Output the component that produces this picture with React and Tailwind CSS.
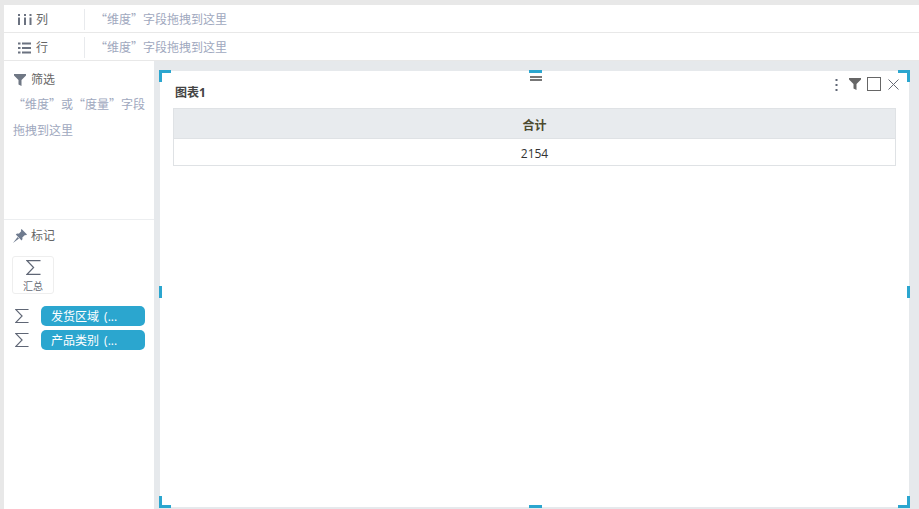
import React from "react";

const font = { fontFamily: '"Open Sans", "Noto Sans CJK SC", sans-serif' };
const cjkFont = { fontFamily: '"Noto Sans CJK SC", sans-serif' };

function Sigma({ className }) {
  return (
    <svg viewBox="0 0 15 15" className={className} fill="none" stroke="#5f6675" strokeWidth="1.2">
      <path d="M14.5 0.6H1L7.6 7.5L1 14.4H14.5" />
    </svg>
  );
}

function FilterIcon({ className, color }) {
  return (
    <svg viewBox="0 0 12 12" className={className} fill={color}>
      <path d="M0 0H12V1.5L7.5 6V12L4.5 10.5V6L0 1.5Z" />
    </svg>
  );
}

function ShelfRow({ icon, label }) {
  return (
    <div className="flex h-[27px] items-center bg-white pt-[2px]">
      <div className="flex w-[80px] items-center pl-[14px]">
        <div className="flex w-[18px]">{icon}</div>
        <span className="text-xs text-[#666666]">{label}</span>
      </div>
      <div className="h-[21px] w-px bg-[#e8eaed]" />
      <span style={cjkFont} className="mb-[2px] ml-[10px] text-xs text-[#a0a8be]">“维度”字段拖拽到这里</span>
    </div>
  );
}

function MarkPill({ label }) {
  return (
    <div className="flex items-center">
      <Sigma className="ml-[3px] h-[14px] w-[14px]" />
      <div className="ml-[12px] flex h-5 w-[104px] items-center rounded-[5px] bg-[#2ba6cf] pl-[10px] pt-[2px] text-xs text-white [word-spacing:2px]">
        {label}
      </div>
    </div>
  );
}

export default function App() {
  return (
    <div style={font} className="flex h-[509px] w-[919px] flex-col overflow-hidden bg-[#e8e8e8] pl-1 pt-[5px]">
      <div className="flex flex-col gap-px">
        <ShelfRow
          label="列"
          icon={
            <svg width="14" height="11" viewBox="0 0 14 11" fill="#6b7280">
              <rect x="0" y="0" width="2" height="2" />
              <rect x="0" y="3.5" width="2" height="7.5" />
              <rect x="6" y="0" width="2" height="2" />
              <rect x="6" y="3.5" width="2" height="7.5" />
              <rect x="11.5" y="0" width="2" height="2" />
              <rect x="11.5" y="3.5" width="2" height="7.5" />
            </svg>
          }
        />
        <ShelfRow
          label="行"
          icon={
            <svg width="13" height="12" viewBox="0 0 13 12" fill="#6b7280">
              <rect x="0" y="0.5" width="2.5" height="2" />
              <rect x="4" y="0.5" width="9" height="2" />
              <rect x="0" y="5" width="2.5" height="2" />
              <rect x="4" y="5" width="9" height="2" />
              <rect x="0" y="9.5" width="2.5" height="2" />
              <rect x="4" y="9.5" width="9" height="2" />
            </svg>
          }
        />
      </div>

      <div className="mt-px flex min-h-0 flex-1 bg-[#e6e9ec]">
        <div className="flex w-[150px] flex-col bg-white">
          <div className="h-[159px] border-b border-[#eceef0] px-[9px] pt-[11px]">
            <div className="flex h-4 items-center pl-px">
              <FilterIcon className="h-[12px] w-[12px]" color="#6f7784" />
              <span className="ml-[5px] text-xs text-[#666666]">筛选</span>
            </div>
            <div style={cjkFont} className="mt-[3px] w-[134px] text-xs leading-[26px] text-[#a0a8be]">
              “维度”或“度量”字段拖拽到这里
            </div>
          </div>

          <div className="px-[8px] pt-[8px]">
            <div className="ml-px flex h-4 items-center">
              <svg width="14" height="14" viewBox="0 0 14 14" fill="#6f7b8f">
                <path d="M8.6 0L14 5.4L13 6.2L12 5.9L9.3 8.4C9.7 9.6 9.4 10.6 8.6 11.4L2.8 5.5C3.6 4.7 4.6 4.4 5.8 4.8L8.2 2.2L7.9 1Z" />
                <path d="M4.6 8L0 14L6 9.4Z" />
              </svg>
              <span className="ml-[4px] text-xs text-[#666666]">标记</span>
            </div>

            <div className="mt-[12px] flex h-[38px] w-[42px] flex-col items-center rounded-[3px] border border-[#eeeeee] pt-[3px]">
              <Sigma className="h-[15px] w-[15px]" />
              <span className="mt-[4px] text-[10px] leading-[14px] text-[#666a75]">汇总</span>
            </div>

            <div className="mt-[12px] flex flex-col gap-1">
              <MarkPill label="发货区域 (..." />
              <MarkPill label="产品类别 (..." />
            </div>
          </div>
        </div>

        <div className="min-w-0 flex-1 pb-[2px] pl-[6px] pr-[10px] pt-[10px]">
          <div className="relative h-full bg-white px-[13px] pt-[14px]">
            <div className="absolute left-[-1px] top-[-1px] h-[12px] w-[12px] border-l-[3px] border-t-[3px] border-[#2ba6cf]" />
            <div className="absolute right-[-1px] top-[-1px] h-[12px] w-[12px] border-r-[3px] border-t-[3px] border-[#2ba6cf]" />
            <div className="absolute bottom-[-1px] left-[-1px] h-[12px] w-[12px] border-b-[3px] border-l-[3px] border-[#2ba6cf]" />
            <div className="absolute bottom-[-1px] right-[-1px] h-[12px] w-[12px] border-b-[3px] border-r-[3px] border-[#2ba6cf]" />
            <div className="absolute left-[369px] top-[-1px] h-[3px] w-[13px] bg-[#2ba6cf]" />
            <div className="absolute bottom-[-1px] left-[369px] h-[3px] w-[13px] bg-[#2ba6cf]" />
            <div className="absolute left-[-1px] top-[215px] h-[12px] w-[3px] bg-[#2ba6cf]" />
            <div className="absolute right-[-1px] top-[215px] h-[12px] w-[3px] bg-[#2ba6cf]" />

            <div className="absolute left-[370px] top-[5px] flex w-[12px] flex-col gap-px">
              <div className="h-[2px] bg-[#777777]" />
              <div className="h-[2px] bg-[#777777]" />
            </div>

            <div className="absolute right-[10px] top-[6px] flex items-center">
              <svg width="3" height="13" viewBox="0 0 3 13" fill="#5f6675">
                <rect x="0.5" y="1" width="2" height="2" />
                <rect x="0.5" y="6" width="2" height="2" />
                <rect x="0.5" y="11" width="2" height="2" />
              </svg>
              <FilterIcon className="ml-[11px] h-[12px] w-[12px]" color="#666666" />
              <div className="ml-[6px] h-[14px] w-[14px] border border-[#666666]" />
              <svg className="ml-[7px]" width="11" height="11" viewBox="0 0 11 11" fill="none" stroke="#666a75" strokeWidth="1">
                <path d="M0.5 0.5L10.5 10.5M10.5 0.5L0.5 10.5" />
              </svg>
            </div>

            <div className="pl-[2px] text-xs font-bold leading-4 text-[#444444]">图表1</div>
            <div className="mt-[7px] border border-[#dfe2e5] text-xs">
              <div className="flex h-[30px] items-center justify-center border-b border-[#dfe2e5] bg-[#e8ebee] pt-[5px] font-bold text-[#4d4a2e]">
                合计
              </div>
              <div className="flex h-[26px] items-center justify-center pt-[4px] text-[#333333]">2154</div>
            </div>
          </div>
        </div>
      </div>
    </div>
  );
}
